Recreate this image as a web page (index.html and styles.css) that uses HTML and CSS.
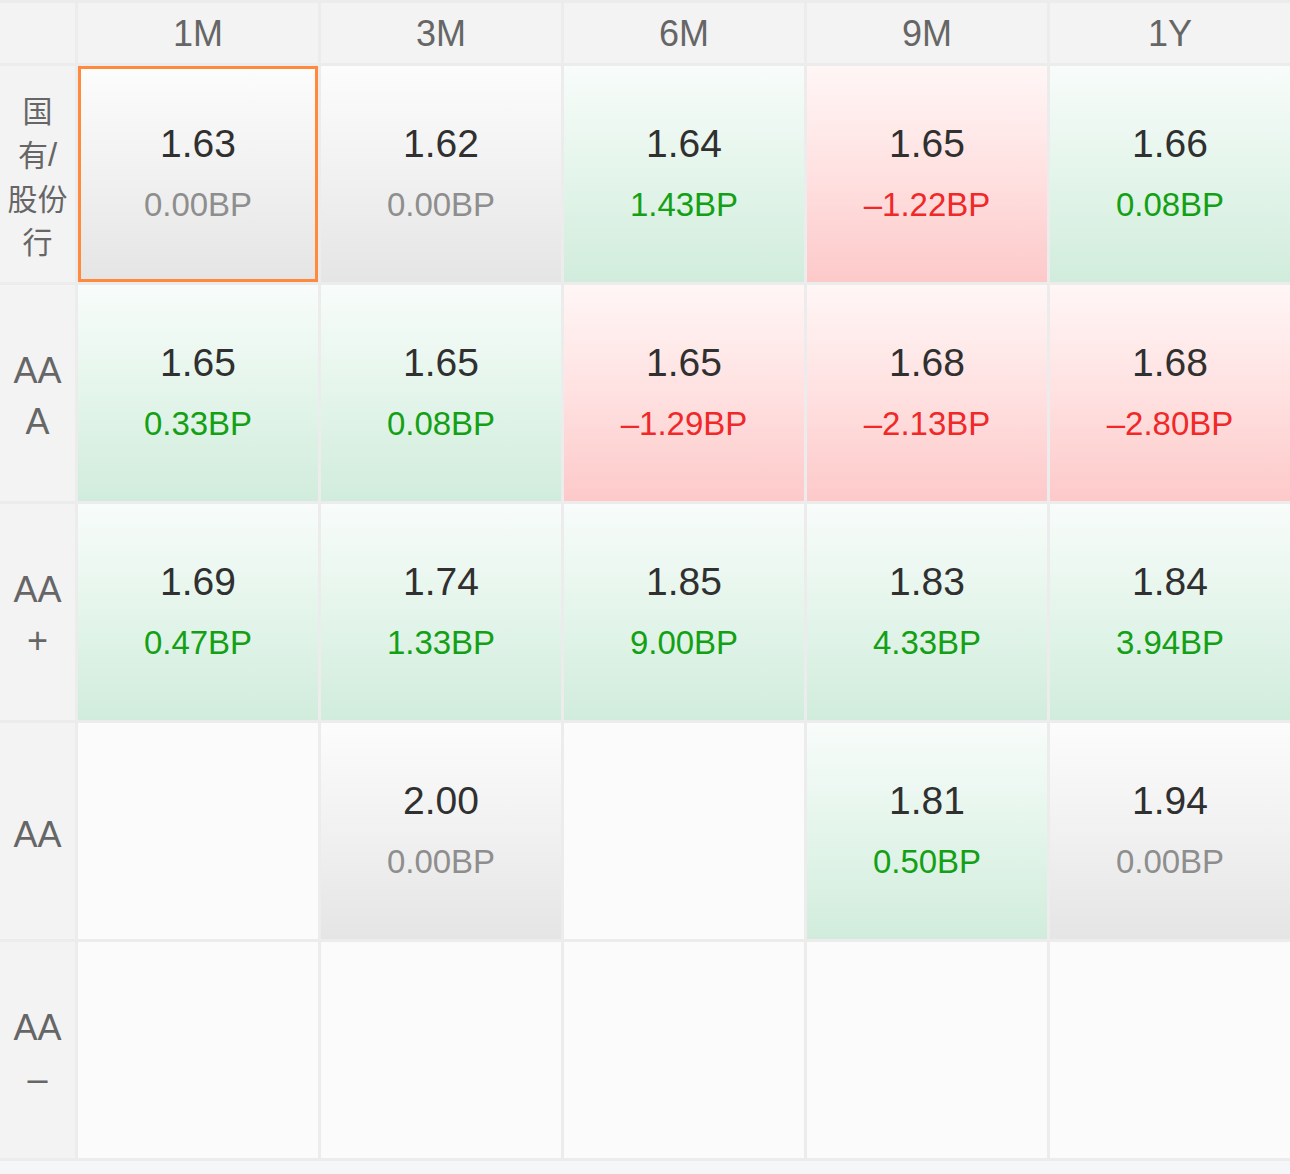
FILE: index.html
```html
<!DOCTYPE html>
<html lang="zh-CN">
<head>
<meta charset="utf-8">
<title>收益率矩阵</title>
<link rel="stylesheet" href="styles.css">
</head>
<body>
<div class="matrix">
  <div class="corner"></div>
  <div class="head">1M</div>
  <div class="head">3M</div>
  <div class="head">6M</div>
  <div class="head">9M</div>
  <div class="head">1Y</div>

  <div class="label label-cjk"><span class="label-text">国<br>有<span class="slash">/</span><br>股份<br>行</span></div>
  <div class="cell flat selected"><span class="val">1.63</span><span class="bp">0.00BP</span></div>
  <div class="cell flat"><span class="val">1.62</span><span class="bp">0.00BP</span></div>
  <div class="cell up"><span class="val">1.64</span><span class="bp">1.43BP</span></div>
  <div class="cell down"><span class="val">1.65</span><span class="bp">–1.22BP</span></div>
  <div class="cell up"><span class="val">1.66</span><span class="bp">0.08BP</span></div>

  <div class="label"><span class="label-text">AA<br>A</span></div>
  <div class="cell up"><span class="val">1.65</span><span class="bp">0.33BP</span></div>
  <div class="cell up"><span class="val">1.65</span><span class="bp">0.08BP</span></div>
  <div class="cell down"><span class="val">1.65</span><span class="bp">–1.29BP</span></div>
  <div class="cell down"><span class="val">1.68</span><span class="bp">–2.13BP</span></div>
  <div class="cell down"><span class="val">1.68</span><span class="bp">–2.80BP</span></div>

  <div class="label"><span class="label-text">AA<br>+</span></div>
  <div class="cell up"><span class="val">1.69</span><span class="bp">0.47BP</span></div>
  <div class="cell up"><span class="val">1.74</span><span class="bp">1.33BP</span></div>
  <div class="cell up"><span class="val">1.85</span><span class="bp">9.00BP</span></div>
  <div class="cell up"><span class="val">1.83</span><span class="bp">4.33BP</span></div>
  <div class="cell up"><span class="val">1.84</span><span class="bp">3.94BP</span></div>

  <div class="label"><span class="label-text">AA</span></div>
  <div class="cell empty"></div>
  <div class="cell flat"><span class="val">2.00</span><span class="bp">0.00BP</span></div>
  <div class="cell empty"></div>
  <div class="cell up"><span class="val">1.81</span><span class="bp">0.50BP</span></div>
  <div class="cell flat"><span class="val">1.94</span><span class="bp">0.00BP</span></div>

  <div class="label"><span class="label-text">AA<br>–</span></div>
  <div class="cell empty"></div>
  <div class="cell empty"></div>
  <div class="cell empty"></div>
  <div class="cell empty"></div>
  <div class="cell empty"></div>
</div>
</body>
</html>
```
FILE: styles.css
```css
html, body {
  margin: 0;
  padding: 0;
  background: #f5f6f8;
}

body {
  font-family: "Liberation Sans", Arial, "Noto Sans CJK SC", sans-serif;
  width: 1290px;
  height: 1174px;
  overflow: hidden;
}

.matrix {
  display: grid;
  grid-template-columns: 75px repeat(5, 240px);
  grid-template-rows: 60px repeat(5, 216px);
  gap: 3px;
  padding: 3px 0;
  background: #ececec;
}

.corner,
.head,
.label {
  background: #f3f3f3;
  color: #666666;
}

.head {
  font-size: 36px;
  line-height: 61px;
  text-align: center;
}

.label {
  display: flex;
  align-items: center;
  justify-content: center;
  text-align: center;
  font-size: 36px;
  line-height: 51px;
  padding-top: 6px;
  box-sizing: border-box;
}

.label-text {
  display: block;
}

.label-cjk {
  font-size: 30px;
  line-height: 43.5px;
  padding-top: 6px;
}

.slash {
  font-size: 33px;
}

.cell {
  display: flex;
  flex-direction: column;
  align-items: center;
  justify-content: center;
  box-sizing: border-box;
}

.val {
  font-size: 39px;
  line-height: 61px;
  color: #303030;
}

.bp {
  font-size: 33px;
  line-height: 61px;
}

.empty {
  background: #fbfbfb;
}

.flat {
  background: linear-gradient(to bottom, #fcfcfc 0%, #f1f1f1 50%, #e5e5e5 100%);
}
.flat .bp {
  color: #8e8e8e;
}

.up {
  background: linear-gradient(to bottom, #f8fcfa 0%, #e4f5eb 50%, #d1ecdc 100%);
}
.up .bp {
  color: #14a014;
}

.down {
  background: linear-gradient(to bottom, #fff6f6 0%, #ffe1e1 50%, #fdc9c9 100%);
}
.down .bp {
  color: #f02828;
}

.selected {
  border: 3px solid #ff8a3d;
}
```
